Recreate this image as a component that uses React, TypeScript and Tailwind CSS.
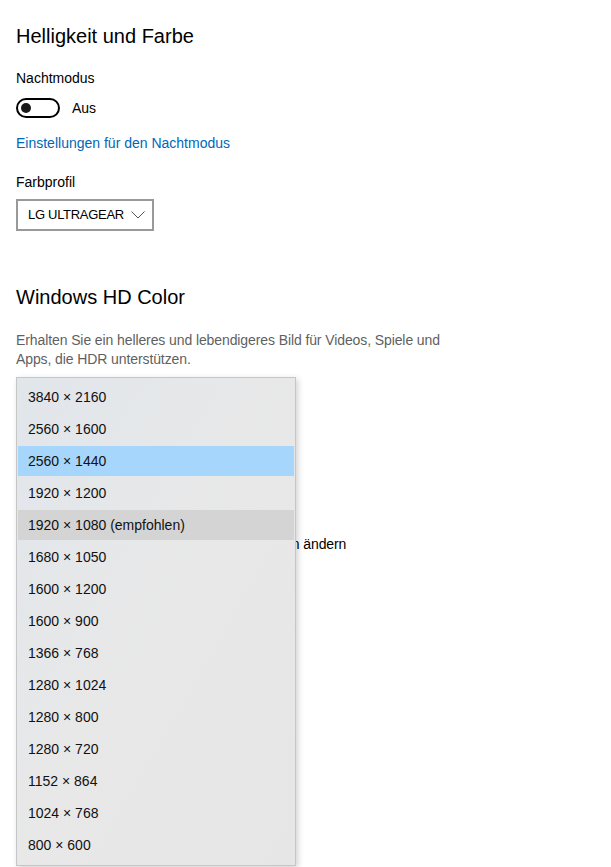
import React from "react";

const resolutions = [
  "3840 × 2160",
  "2560 × 1600",
  "2560 × 1440",
  "1920 × 1200",
  "1920 × 1080 (empfohlen)",
  "1680 × 1050",
  "1600 × 1200",
  "1600 × 900",
  "1366 × 768",
  "1280 × 1024",
  "1280 × 800",
  "1280 × 720",
  "1152 × 864",
  "1024 × 768",
  "800 × 600",
];

const selected = "2560 × 1440";
const hovered = "1920 × 1080 (empfohlen)";

const Toggle = ({ on }: { on: boolean }) => (
  <div className="w-[44px] h-[20px] rounded-full border-2 border-black flex items-center px-[3px]">
    <div className={`w-[10px] h-[10px] rounded-full bg-[#1a1a1a] ${on ? "ml-auto" : ""}`} />
  </div>
);

// open resolution list, drawn over the settings below it
const ResolutionMenu = () => (
  <div className="absolute left-[16px] top-[377px] w-[280px] h-[489px] border border-[#c6c6c6] bg-linear-to-br from-[#e1e6eb] via-[#e8e8e8] to-[#e6e6e6] shadow-[2px_2px_6px_rgba(0,0,0,0.18)] pt-[3px] px-px">
    {resolutions.map((res) => (
      <div key={res} className="h-[32px] py-px">
        <div
          className={`h-full flex items-center pl-[10px] text-[14px] text-[#111] whitespace-nowrap ${
            res === selected ? "bg-[#a6d6fc]" : res === hovered ? "bg-[#d4d4d4]" : ""
          }`}
        >
          {res}
        </div>
      </div>
    ))}
  </div>
);

export default function App() {
  return (
    <div className="relative min-h-[867px] bg-white font-['Liberation_Sans',sans-serif] text-black pl-[16px] pt-[22px] overflow-hidden">
      <h2 className="text-[20px] leading-[28px]">Helligkeit und Farbe</h2>

      <div className="mt-[18px] text-[14px] leading-[20px]">Nachtmodus</div>
      <div className="mt-[10px] flex items-center gap-[12px] h-[20px]">
        <Toggle on={false} />
        <span className="text-[14px]">Aus</span>
      </div>

      <a className="block mt-[15px] text-[14px] leading-[20px] text-[#0067b8]">Einstellungen für den Nachtmodus</a>

      <div className="mt-[19px] text-[14px] leading-[20px]">Farbprofil</div>
      <div className="mt-[7px] w-[138px] h-[32px] border-2 border-[#999] flex items-center justify-between pl-[10px] pr-[7px] whitespace-nowrap">
        <span className="text-[13px] tracking-[-0.3px]">LG ULTRAGEAR</span>
        <svg className="shrink-0" width="14" height="8" viewBox="0 0 14 8" fill="none" stroke="#555" strokeWidth="1">
          <path d="M0.5 0.5 L7 7 L13.5 0.5" />
        </svg>
      </div>

      <h2 className="mt-[52px] text-[20px] leading-[28px]">Windows HD Color</h2>
      <p className="mt-[20px] text-[14px] leading-[19px] text-[#5f5f5f] tracking-[-0.1px]">
        Erhalten Sie ein helleres und lebendigeres Bild für Videos, Spiele und
        <br />
        Apps, die HDR unterstützen.
      </p>

      <div className="mt-[165px] text-[14px] leading-[20px] tracking-[-0.1px]">
        Größe von Text, Apps und anderen Elementen ändern
      </div>

      <ResolutionMenu />
    </div>
  );
}
